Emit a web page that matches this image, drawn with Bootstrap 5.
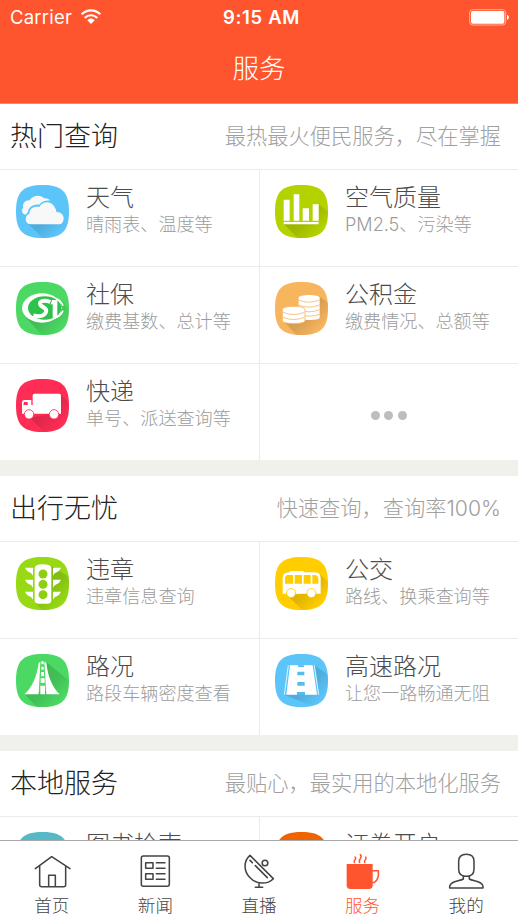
<!DOCTYPE html>
<html lang="zh-CN">
<head>
<meta charset="utf-8">
<meta name="viewport" content="width=device-width, initial-scale=1">
<title>服务</title>
<link href="https://cdn.jsdelivr.net/npm/bootstrap@5.3.0/dist/css/bootstrap.min.css" rel="stylesheet">
<style>
  body { font-family: "Noto Sans CJK SC", sans-serif; font-weight: 300; background: #f0f1ec; line-height: 1; }
  .phone { height: 920px; }
  .topbar { height: 104px; background: #ff552e; color: #fff; border-bottom: 1px solid #dd8f7c; }
  .status { height: 34px; font-family: Inter, sans-serif; font-size: 18px; font-weight: 400; padding: 0 9px 0 10px; }
  .status .carrier { font-size: 18.5px; letter-spacing: .2px; }
  .status .clock { font-weight: 600; font-size: 18.5px; letter-spacing: .65px; padding-left: 4px; }
  .screen-title { font-size: 26.6px; height: 66px; }
  .sect { background: #fff; margin-bottom: 16px; }
  .sect-head { height: 66px; padding: 0 17px 5px 10px; border-bottom: 1px solid #ecece6; }
  .sect-head h2 { font-size: 27px; font-weight: 300; color: #222; line-height: 1; }
  .sect-head .hint { font-size: 21.25px; color: #a0a0a0; padding-top: 2px; }
  .lat { font-family: Inter, sans-serif; line-height: 0; }
  .grid2 { display: grid; grid-template-columns: 260px 1fr; }
  .tile { height: 97px; padding: 14px 0 0 16px; border-bottom: 1px solid #ecece6; gap: 17px; }
  .tile.l { border-right: 1px solid #ecece6; }
  .tile.r { padding-left: 15px; }
  .tile.last { height: 96px; border-bottom: 0; }
  .tile svg { width: 53px; height: 53px; flex: none; margin-top: 1px; }
  .tile h3 { font-size: 24px; font-weight: 300; color: #4c4c4c; line-height: 24px; margin: 0 0 6px; }
  .tile p { font-size: 18.1px; color: #9c9c9c; line-height: 18px; margin: 0; white-space: nowrap; }
  .tile.more { padding: 6px 1px 0 0; gap: 4.5px; }
  .more i { width: 9px; height: 9px; border-radius: 50%; background: #bdbdbd; }
  .tabs { height: 80px; background: #fff; border-top: 1px solid #a9a9a9; font-size: 17.6px; color: #444; padding-top: 10px; }
  .tabs svg { width: 40px; height: 40px; }
  .tabs a { color: inherit; text-decoration: none; gap: 5px; flex: 1 1 0; }
  .tabs a.on { color: #ff552e; }
  .ln { fill: none; stroke: currentColor; stroke-width: 4.6; stroke-linejoin: round; stroke-linecap: round; }
</style>
</head>
<body>
<svg width="0" height="0" class="position-absolute" aria-hidden="true">
  <defs>
    <path id="sq" d="M79.5 0C138 0 159 21 159 79.5S138 159 79.5 159 0 138 0 79.5 21 0 79.5 0Z"/>
    <clipPath id="sqc"><use href="#sq"/></clipPath>
    <linearGradient id="sh" gradientUnits="userSpaceOnUse" x1="60" y1="60" x2="138" y2="138"><stop offset="0" stop-opacity=".15"/><stop offset=".5" stop-opacity=".12"/><stop offset="1" stop-opacity="0"/></linearGradient>
  </defs>
</svg>
<div class="phone d-flex flex-column overflow-hidden">
  <header class="topbar flex-shrink-0">
    <div class="status d-flex align-items-center">
      <div class="col d-flex align-items-center">
        <span class="carrier">Carrier</span>
        <svg class="ms-2" width="22" height="16" viewBox="0 0 66 48"><g fill="none" stroke="#fff" stroke-width="6.5"><path d="M5 16C21 0 45 0 61 16"/><path d="M14 27C25 16 41 16 52 27"/></g><path d="M33 45L22 34C28 27 38 27 44 34Z" fill="#fff"/></svg>
      </div>
      <div class="clock">9:15 AM</div>
      <div class="col d-flex justify-content-end">
        <svg width="40" height="17" viewBox="0 0 120 51"><rect x="2" y="2" width="108" height="46" rx="9" fill="none" stroke="#ffb3a0" stroke-width="3"/><rect x="6" y="6" width="100" height="38" rx="5" fill="#fff"/><path d="M114 17Q120 20 120 25T114 33Z" fill="#fff"/></svg>
      </div>
    </div>
    <h1 class="screen-title d-flex align-items-center justify-content-center m-0 fw-light">服务</h1>
  </header>

  <main class="flex-grow-1 overflow-hidden">
    <section class="sect">
      <div class="sect-head d-flex align-items-center justify-content-between"><h2 class="m-0">热门查询</h2><span class="hint">最热最火便民服务，尽在掌握</span></div>
      <div class="grid2">
        <div class="tile l d-flex">
          <svg viewBox="0 0 159 159"><use href="#sq" fill="#5bc5fa"/><path clip-path="url(#sqc)" d="M34 114L80 159H159V125L138 98L60 110Z" fill="url(#sh)"/>
            <path d="M29 89C18 88 15 76 22 67C18 56 28 45 41 46C50 30 74 28 84 40C92 39 98 41 102 47C88 46 76 50 70 59C52 57 38 66 36 80Z" fill="#f8f8f8"/>
            <path d="M45 118C25 118 25 91 40 86C40 70 55 62 70 66C78 48 105 46 115 65C120 72 121 77 121 81C134 80 144 90 143 102C142 112 137 118 130 118Z" fill="#f8f8f8"/></svg>
          <div><h3>天气</h3><p>晴雨表、温度等</p></div>
        </div>
        <div class="tile r d-flex">
          <svg viewBox="0 0 159 159"><use href="#sq" fill="#b4d200"/><path clip-path="url(#sqc)" d="M26 117L68 159H159V80L131 58V114Z" fill="url(#sh)"/>
            <path d="M26 44H44V107H26ZM56 28H73V107H56ZM83 70H102V107H83ZM113 58H131V107H113ZM26 111H131V118H26Z" fill="#fff"/></svg>
          <div><h3>空气质量</h3><p><span class="lat">PM2.5</span>、污染等</p></div>
        </div>
        <div class="tile l d-flex">
          <svg viewBox="0 0 159 159"><use href="#sq" fill="#4bd963"/><path clip-path="url(#sqc)" d="M30 108L78 159H159V90L138 55Z" fill="url(#sh)"/>
            <ellipse cx="78" cy="78" rx="60" ry="44" fill="#fff"/><ellipse cx="86" cy="78" rx="50" ry="35" fill="#2fc24a"/>
            <path d="M130 68L146 60V92L130 87L139 77Z" fill="#42cb5a"/>
            <path d="M103 60C82 52 68 58 73 68C78 77 95 78 90 90C85 102 70 105 52 100" fill="none" stroke="#fff" stroke-width="12"/>
            <path d="M108 54H124V107H110V66L104 68Z" fill="#fff"/><path d="M122 50C132 55 138 62 141 71M122 106C132 101 138 94 141 86" fill="none" stroke="#fff" stroke-width="5"/></svg>
          <div><h3>社保</h3><p>缴费基数、总计等</p></div>
        </div>
        <div class="tile r d-flex">
          <svg viewBox="0 0 159 159"><use href="#sq" fill="#f7b55e"/><path clip-path="url(#sqc)" d="M26 118L65 159H159V62L132 42V110Z" fill="url(#sh)"/>
            <path d="M71 47C71 36 134 36 134 47V107C134 116 71 116 71 107Z" fill="#fff"/>
            <path d="M71 54Q102 67 134 54M71 69Q102 82 134 69M71 83Q102 96 134 83M71 97Q102 108 134 97" fill="none" stroke="#f5b766" stroke-width="2.4"/>
            <path d="M22 82C22 70 90 70 90 82V117C90 127 22 127 22 117Z" fill="#fff" stroke="#f5b766" stroke-width="2.6"/>
            <path d="M24 91Q56 104 88 91M24 106Q56 119 88 106" fill="none" stroke="#f5b766" stroke-width="2.4"/></svg>
          <div><h3>公积金</h3><p>缴费情况、总额等</p></div>
        </div>
        <div class="tile l last d-flex">
          <svg viewBox="0 0 159 159"><use href="#sq" fill="#ff2d55"/><path clip-path="url(#sqc)" d="M40 116L85 159H159V70L134 48V100Z" fill="url(#sh)"/>
            <path d="M55 44H129Q135 44 135 50V104H18V70Q18 63 25 63H46V78H50V50Q50 44 55 44Z" fill="#fff"/><path d="M24 69H35V78H22Z" fill="#ff2d55"/>
            <g fill="#fff" stroke="#ff2d55" stroke-width="2.5"><circle cx="39" cy="106" r="14"/><circle cx="114" cy="106" r="14"/></g></svg>
          <div><h3>快递</h3><p>单号、派送查询等</p></div>
        </div>
        <div class="tile r last more d-flex justify-content-center align-items-center"><i></i><i></i><i></i></div>
      </div>
    </section>

    <section class="sect">
      <div class="sect-head d-flex align-items-center justify-content-between"><h2 class="m-0">出行无忧</h2><span class="hint">快速查询，查询率<span class="lat">100%</span></span></div>
      <div class="grid2">
        <div class="tile l d-flex">
          <svg viewBox="0 0 159 159"><use href="#sq" fill="#97d913"/><path clip-path="url(#sqc)" d="M58 138L78 159H159V60L108 28Z" fill="url(#sh)"/>
            <path d="M56 34Q56 22 81 22T106 34V130Q106 140 96 140H66Q56 140 56 130Z" fill="#fff"/>
            <g fill="#8fcf12"><circle cx="81" cy="51" r="13.5"/><circle cx="81" cy="82" r="13.5"/><circle cx="81" cy="113" r="13.5"/></g>
            <path d="M27 32H51V56Q48 49 40 46T27 32ZM27 68H51V92Q48 85 40 82T27 68ZM27 104H51V128Q48 121 40 118T27 104ZM135 32H111V56Q114 49 122 46T135 32ZM135 68H111V92Q114 85 122 82T135 68ZM135 104H111V128Q114 121 122 118T135 104Z" fill="#fff"/></svg>
          <div><h3>违章</h3><p>违章信息查询</p></div>
        </div>
        <div class="tile r d-flex">
          <svg viewBox="0 0 159 159"><use href="#sq" fill="#ffcd00"/><path clip-path="url(#sqc)" d="M38 116L82 159H159V75L133 50V104Z" fill="url(#sh)"/>
            <path d="M45 42H86V46H120Q137 46 137 64V110H23V64Q23 46 42 46H45Z" fill="#fff"/>
            <path d="M38 54H54V80H30V66Q30 55 38 54ZM59 54H81V80H59ZM86 54H107V80H86ZM112 54H121Q130 56 130 66V80H112Z" fill="#ffcd00"/>
            <g fill="#fff" stroke="#ffcd00" stroke-width="2.5"><circle cx="48" cy="108" r="13.5"/><circle cx="109" cy="108" r="13.5"/></g></svg>
          <div><h3>公交</h3><p>路线、换乘查询等</p></div>
        </div>
        <div class="tile l last d-flex">
          <svg viewBox="0 0 159 159"><use href="#sq" fill="#4bd963"/><path clip-path="url(#sqc)" d="M26 121L62 159H159V80L91 24L100 110Z" fill="url(#sh)"/>
            <path d="M68 27L73 23L68 121H25C48 102 63 66 68 27ZM91 27L85 23L91 121H131C110 102 95 66 91 27ZM76 22H83V31H76ZM76 38H83V47H76ZM75 54H84V67H75ZM74 73H86V87H74ZM73 95H87V121H73Z" fill="#fff"/></svg>
          <div><h3>路况</h3><p>路段车辆密度查看</p></div>
        </div>
        <div class="tile r last d-flex">
          <svg viewBox="0 0 159 159"><use href="#sq" fill="#5bc5fa"/><path clip-path="url(#sqc)" d="M28 122L118 159H159V62L118 34L132 122Z" fill="url(#sh)"/>
            <path d="M45 34H113L126 122H34Z" fill="#fff"/>
            <path d="M69 34H87V39H69ZM67 53H88V64H67ZM67 84H89V95H67ZM66 114H90V123H66Z" fill="#54bbef"/>
            <path d="M40 34L28 122M118 34L131 122" stroke="#fff" stroke-width="2.5"/></svg>
          <div><h3>高速路况</h3><p>让您一路畅通无阻</p></div>
        </div>
      </div>
    </section>

    <section class="sect">
      <div class="sect-head d-flex align-items-center justify-content-between"><h2 class="m-0">本地服务</h2><span class="hint">最贴心，最实用的本地化服务</span></div>
      <div class="grid2">
        <div class="tile l d-flex">
          <svg viewBox="0 0 159 159"><use href="#sq" fill="#55b9c7"/></svg>
          <div><h3>图书检索</h3></div>
        </div>
        <div class="tile r d-flex">
          <svg viewBox="0 0 159 159"><use href="#sq" fill="#f06400"/></svg>
          <div><h3>证券开户</h3></div>
        </div>
      </div>
    </section>
  </main>

  <nav class="tabs d-flex flex-shrink-0">
    <a href="#" class="d-flex flex-column align-items-center"><svg viewBox="0 0 120 120"><path class="ln" d="M10 53L59 17L114 53M23 46V101Q23 107 29 107H95Q101 107 101 101V46M50 107V73H70V107"/></svg><span>首页</span></a>
    <a href="#" class="d-flex flex-column align-items-center"><svg viewBox="0 0 120 120"><path class="ln" d="M25 15H97Q103 15 103 21V100Q103 106 97 106H25Q19 106 19 100V21Q19 15 25 15ZM32 35H54V52H32ZM32 68H54V85H32ZM64 35H90M64 52H90M64 68H90M64 85H90"/></svg><span>新闻</span></a>
    <a href="#" class="d-flex flex-column align-items-center"><svg viewBox="0 0 120 120"><path class="ln" d="M33 13L103 83C86 101 53 101 34 81C12 60 14 29 33 13ZM33 28L40 35M49 44L85 80M60 97V109M49 109H71"/><circle class="ln" cx="78" cy="36" r="8.5"/></svg><span>直播</span></a>
    <a href="#" class="on d-flex flex-column align-items-center"><svg viewBox="0 0 120 120"><path fill="currentColor" d="M11 39H89V103Q89 114 78 114H22Q11 114 11 103Z"/><path class="ln" d="M89 59H106Q108 76 102 86Q97 95 89 95"/><path class="ln" d="M34 34Q32 31 36 26T36 18M50 34Q47 30 52 23T52 11M65 34Q63 31 67 26T68 18"/></svg><span>服务</span></a>
    <a href="#" class="d-flex flex-column align-items-center"><svg viewBox="0 0 120 120"><path class="ln" d="M61 10Q84 10 84 31V54Q84 76 61 76T38 54V31Q38 10 61 10ZM52 75V84C40 91 12 90 11 106V111H111V106C110 90 82 91 70 84V75"/></svg><span>我的</span></a>
  </nav>
</div>
<script src="https://cdn.jsdelivr.net/npm/bootstrap@5.3.0/dist/js/bootstrap.bundle.min.js"></script>
</body>
</html>
